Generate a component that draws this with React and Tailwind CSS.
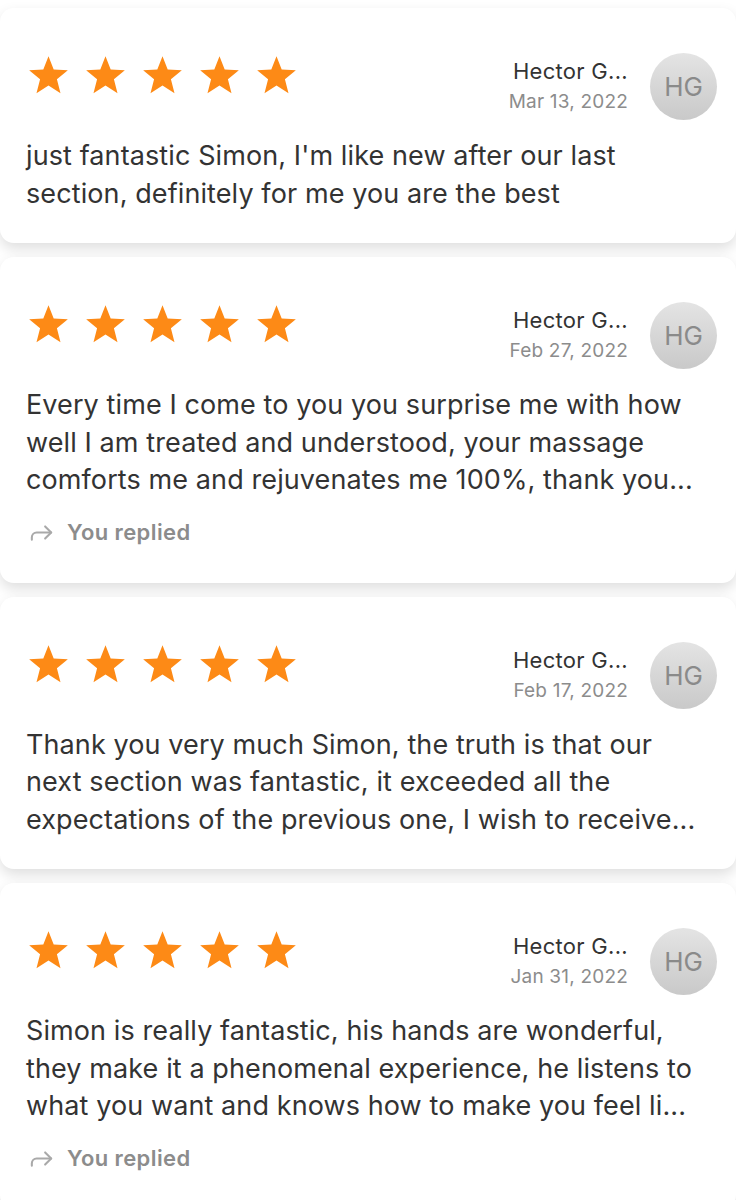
import React from 'react';
import { Forward } from 'lucide-react';

const reviews = [
  {
    date: 'Mar 13, 2022',
    lines: ["just fantastic Simon, I'm like new after our last", 'section, definitely for me you are the best'],
    replied: false,
  },
  {
    date: 'Feb 27, 2022',
    lines: [
      'Every time I come to you you surprise me with how',
      'well I am treated and understood, your massage',
      'comforts me and rejuvenates me 100%, thank you...',
    ],
    replied: true,
  },
  {
    date: 'Feb 17, 2022',
    lines: [
      'Thank you very much Simon, the truth is that our',
      'next section was fantastic, it exceeded all the',
      'expectations of the previous one, I wish to receive...',
    ],
    replied: false,
  },
  {
    date: 'Jan 31, 2022',
    lines: [
      'Simon is really fantastic, his hands are wonderful,',
      'they make it a phenomenal experience, he listens to',
      'what you want and knows how to make you feel li...',
    ],
    replied: true,
  },
];

function Star() {
  return (
    <svg viewBox="0 0 24 24" className="w-[45px] h-[43px]">
      <polygon
        points="12,1.2 14.9,8.6 22.8,9.1 16.7,14.1 18.7,21.9 12,17.6 5.3,21.9 7.3,14.1 1.2,9.1 9.1,8.6"
        fill="#fd8a16"
      />
    </svg>
  );
}

function ReviewCard({ review }) {
  return (
    <div className="bg-white rounded-[14px] shadow-[0_6px_14px_rgba(0,0,0,0.13)] pt-[45px] pb-[31px] pl-[26px] pr-[19px]">
      {/* Cabecera */}
      <div className="flex items-start justify-between">
        <div className="flex gap-[12px] pt-[1px]">
          {[0, 1, 2, 3, 4].map((i) => (
            <Star key={i} />
          ))}
        </div>
        <div className="flex items-center gap-[22px]">
          <div className="flex flex-col items-end">
            <span className="text-[22px] leading-[30px] tracking-[0.3px] text-[#333333]">Hector G...</span>
            <span className="text-[19px] leading-[31px] tracking-[0.2px] text-[#8c8c8c]">{review.date}</span>
          </div>
          <div className="w-[67px] h-[67px] rounded-full bg-gradient-to-b from-[#e4e4e4] to-[#c9c9c9] flex items-center justify-center">
            <span className="text-[26px] text-[#8a8a8a]">HG</span>
          </div>
        </div>
      </div>

      {/* Texto */}
      <div className="mt-[17px] text-[27px] leading-[37.5px] tracking-[0.1px] text-[#333333]">
        {review.lines.map((l, i) => (
          <div key={i} className="whitespace-nowrap">{l}</div>
        ))}
      </div>

      {review.replied && (
        <div className="mt-[15px] mb-[1px] flex items-center gap-[11px] text-[#8c8c8c]">
          <Forward className="w-[29px] h-[29px] text-[#a9a9a9] ml-[1px]" strokeWidth={1.7} />
          <span className="text-[22px] leading-[37px] tracking-[0.4px] font-semibold">You replied</span>
        </div>
      )}
    </div>
  );
}

export default function App() {
  return (
    <div className="bg-white min-h-[1200px] w-[736px] overflow-hidden font-['Inter',sans-serif]">
      <div className="flex flex-col gap-[14px] -mt-[6px]">
        <div className="h-0 shadow-[0_6px_14px_rgba(0,0,0,0.13)]" />
        {reviews.map((r, i) => (
          <ReviewCard key={i} review={r} />
        ))}
      </div>
    </div>
  );
}
